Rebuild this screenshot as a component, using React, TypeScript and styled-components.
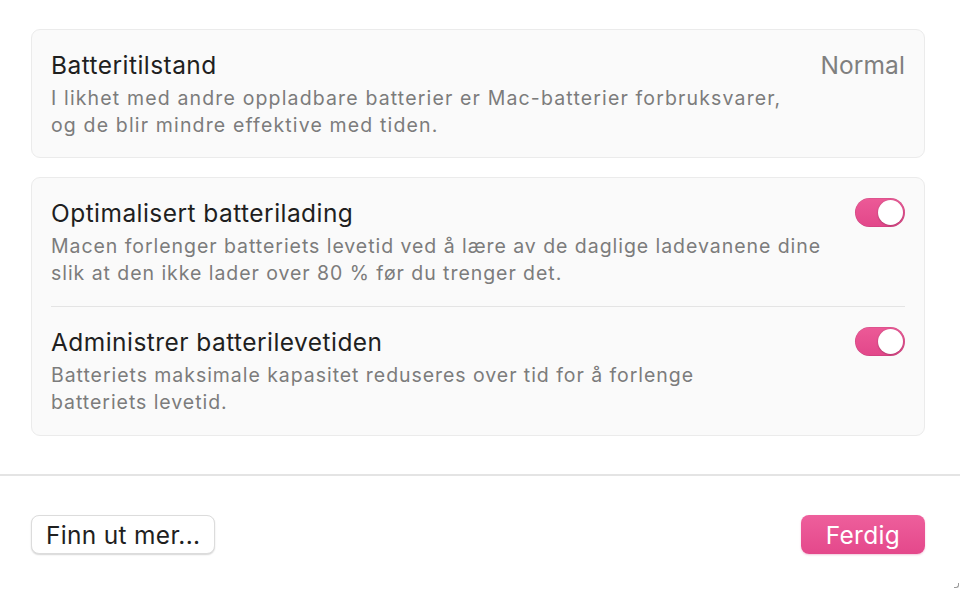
import styled, { createGlobalStyle } from 'styled-components';

const GlobalStyle = createGlobalStyle`
  html, body {
    margin: 0;
    padding: 0;
    background: #ffffff;
  }
  body {
    font-family: Inter, "Noto Sans", "Liberation Sans", sans-serif;
    -webkit-font-smoothing: antialiased;
  }
`;

const Window = styled.div`
  width: 960px;
  height: 589px;
  background: #ffffff;
  display: flex;
  flex-direction: column;
  position: relative;
  overflow: hidden;
`;

const Content = styled.div`
  display: flex;
  flex-direction: column;
  gap: 19px;
  padding: 29px 35px 0 31px;
  height: 474px;
  box-sizing: border-box;
`;

const Card = styled.div`
  background: #fafafa;
  border: 1px solid #ebebeb;
  border-radius: 9px;
  padding: 0 19px;
  display: flex;
  flex-direction: column;
`;

const Row = styled.div<{ $divider?: boolean }>`
  display: flex;
  justify-content: space-between;
  align-items: flex-start;
  padding: 20px 0 18px;
  border-top: ${p => (p.$divider ? '1px solid #e4e4e4' : 'none')};
`;

const ToggleRow = styled(Row)`
  padding-bottom: 19px;
`;

const TextBlock = styled.div`
  display: flex;
  flex-direction: column;
  gap: 4px;
`;

const Title = styled.div`
  font-size: 24.5px;
  line-height: 31px;
  color: #1f1f1f;
  letter-spacing: 0.45px;
`;

const Description = styled.div<{ $spacing?: number }>`
  font-size: 19.5px;
  line-height: 27px;
  color: #7c7c7c;
  letter-spacing: ${p => p.$spacing ?? 0.95}px;
  white-space: nowrap;
`;

const Status = styled.div`
  font-size: 24.5px;
  line-height: 31px;
  color: #7f7f7f;
  letter-spacing: 0.1px;
`;

const Toggle = styled.div<{ $on: boolean }>`
  width: 50px;
  height: 29px;
  border-radius: 15px;
  margin-top: 0;
  flex-shrink: 0;
  background: ${p => (p.$on ? 'linear-gradient(180deg, #ec5a97 0%, #e2478a 100%)' : '#dcdcdc')};
  display: flex;
  align-items: center;
  justify-content: ${p => (p.$on ? 'flex-end' : 'flex-start')};
  padding: 0 2px;
  box-sizing: border-box;
  box-shadow: inset 0 0 0 0.5px rgba(0, 0, 0, 0.12);
`;

const Knob = styled.div`
  width: 25px;
  height: 25px;
  border-radius: 50%;
  background: #ffffff;
  box-shadow: 0 0.5px 2px rgba(0, 0, 0, 0.3);
`;

const Separator = styled.div`
  height: 2px;
  background: #e4e4e4;
`;

const Footer = styled.div`
  flex: 1;
  display: flex;
  justify-content: space-between;
  align-items: flex-start;
  padding: 39px 35px 0 31px;
`;

const Button = styled.button<{ $primary?: boolean }>`
  font-family: inherit;
  font-size: 24.5px;
  letter-spacing: 0.3px;
  height: 39px;
  padding: 0 ${p => (p.$primary ? '25px' : '14px')};
  border-radius: 8px;
  cursor: pointer;
  color: ${p => (p.$primary ? '#ffffff' : '#1f1f1f')};
  border: ${p => (p.$primary ? 'none' : '1px solid #dcdcdc')};
  background: ${p => (p.$primary ? 'linear-gradient(180deg, #ee5f9c 0%, #e4488b 100%)' : '#ffffff')};
  box-shadow: ${p => (p.$primary ? '0 1px 2px rgba(200, 40, 110, 0.25)' : '0 1px 1.5px rgba(0, 0, 0, 0.16)')};
`;

const Grip = styled.div`
  position: absolute;
  right: 1px;
  bottom: 1px;
  width: 4px;
  height: 4px;
  border-right: 1.5px solid #9a9a9a;
  border-bottom: 1.5px solid #9a9a9a;
  border-bottom-right-radius: 3px;
`;

const settings = [
  {
    title: 'Optimalisert batterilading',
    lines: [
      'Macen forlenger batteriets levetid ved å lære av de daglige ladevanene dine',
      'slik at den ikke lader over 80 % før du trenger det.',
    ],
  },
  {
    title: 'Administrer batterilevetiden',
    lines: [
      'Batteriets maksimale kapasitet reduseres over tid for å forlenge',
      'batteriets levetid.',
    ],
  },
];

const App = () => {
  return (
    <Window>
      <GlobalStyle />
      <Content>
        <Card>
          <Row>
            <TextBlock>
              <Title>Batteritilstand</Title>
              <Description $spacing={1.15}>
                I likhet med andre oppladbare batterier er Mac-batterier forbruksvarer,
                <br />
                og de blir mindre effektive med tiden.
              </Description>
            </TextBlock>
            <Status>Normal</Status>
          </Row>
        </Card>
        <Card>
          {settings.map((s, i) => (
            <ToggleRow key={s.title} $divider={i > 0}>
              <TextBlock>
                <Title>{s.title}</Title>
                <Description>
                  {s.lines[0]}
                  <br />
                  {s.lines[1]}
                </Description>
              </TextBlock>
              <Toggle $on>
                <Knob />
              </Toggle>
            </ToggleRow>
          ))}
        </Card>
      </Content>
      <Separator />
      <Footer>
        <Button>Finn ut mer...</Button>
        <Button $primary>Ferdig</Button>
      </Footer>
      <Grip />
    </Window>
  );
};

export default App;
